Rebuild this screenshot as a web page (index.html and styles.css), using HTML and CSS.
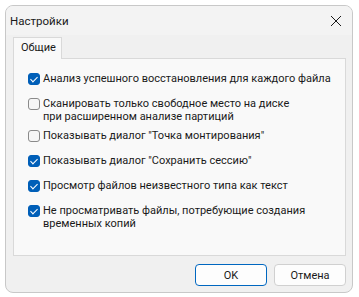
FILE: index.html
```html
<!DOCTYPE html>
<html lang="ru">
<head>
<meta charset="utf-8">
<link rel="stylesheet" href="styles.css">
</head>
<body>
<div class="window">
  <div class="titlebar">
    <span class="title">Настройки</span>
    <svg class="close" width="12" height="12" viewBox="0 0 12 12"><path d="M1 1L11 11M11 1L1 11" stroke="#1a1a1a" stroke-width="1"/></svg>
  </div>
  <div class="body">
    <div class="tabs"><div class="tab">Общие</div></div>
    <div class="panel">
      <label class="row"><span class="cb on"></span><span class="txt">Анализ успешного восстановления для каждого файла</span></label>
      <label class="row multi"><span class="cb"></span><span class="txt">Сканировать только свободное место на диске<br>при расширенном анализе партиций</span></label>
      <label class="row"><span class="cb"></span><span class="txt">Показывать диалог "Точка монтирования"</span></label>
      <label class="row"><span class="cb on"></span><span class="txt">Показывать диалог "Сохранить сессию"</span></label>
      <label class="row"><span class="cb on"></span><span class="txt">Просмотр файлов неизвестного типа как текст</span></label>
      <label class="row"><span class="cb on"></span><span class="txt">Не просматривать файлы, потребующие создания<br>временных копий</span></label>
    </div>
    <div class="buttons">
      <button class="btn primary">OK</button>
      <button class="btn">Отмена</button>
    </div>
  </div>
</div>
</body>
</html>
```
FILE: styles.css
```css
* { box-sizing: border-box; }
html, body { margin: 0; padding: 0; background: #ffffff; }
body { font-family: Roboto, "Noto Sans", "Liberation Sans", sans-serif; font-size: 11px; color: #1a1a1a; }
.window {
  margin: 5px 0 0 5px;
  width: 348px;
  height: 288px;
  border: 1px solid #c8c8c8;
  border-radius: 8px;
  background: #f0f0f0;
  overflow: hidden;
  display: flex;
  flex-direction: column;
}
.titlebar {
  height: 29px;
  flex: none;
  background: #f3f3f3;
  display: flex;
  align-items: center;
  justify-content: space-between;
  padding: 0 10px 0 4px;
}
.title { font-size: 11.5px; }
.close { display: block; }
.body { flex: 1; padding: 2px 6px 0 7px; display: flex; flex-direction: column; }
.tabs { display: flex; height: 21px; flex: none; }
.tab {
  background: #f9f9f9;
  border: 1px solid #d9d9d9;
  border-bottom: none;
  padding: 0 7px;
  line-height: 20px;
  width: 49px;
  height: 22px;
  position: relative;
  z-index: 1;
}
.panel {
  background: #f9f9f9;
  border: 1px solid #d9d9d9;
  height: 198px;
  flex: none;
  padding: 13px 0 0 14px;
  display: flex;
  flex-direction: column;
  gap: 12px;
}
.row { display: flex; align-items: flex-start; gap: 3px; line-height: 13px; }
.row.multi { margin-bottom: -6px; }
.cb {
  width: 12px; height: 12px;
  margin-top: 0.5px;
  border: 1px solid #8a8a8a;
  border-radius: 3px;
  background: #f6f6f6;
  flex: none;
  position: relative;
}
.cb.on { background: #005fb8; border-color: #005fb8; }
.cb.on::after {
  content: "";
  position: absolute;
  left: 3px; top: 1px;
  width: 3px; height: 6px;
  border: solid #fff;
  border-width: 0 1px 1px 0;
  transform: rotate(45deg);
}
.txt { white-space: nowrap; }
.buttons { display: flex; justify-content: flex-end; gap: 7px; padding-top: 8px; padding-right: 0; }
.btn {
  width: 72px; height: 22px;
  font-family: inherit; font-size: 11px; color: #1a1a1a;
  background: #fdfdfd;
  border: 1px solid #d0d0d0;
  border-radius: 4px;
  padding: 0;
}
.btn.primary { border: 1.5px solid #0067c0; }
```
